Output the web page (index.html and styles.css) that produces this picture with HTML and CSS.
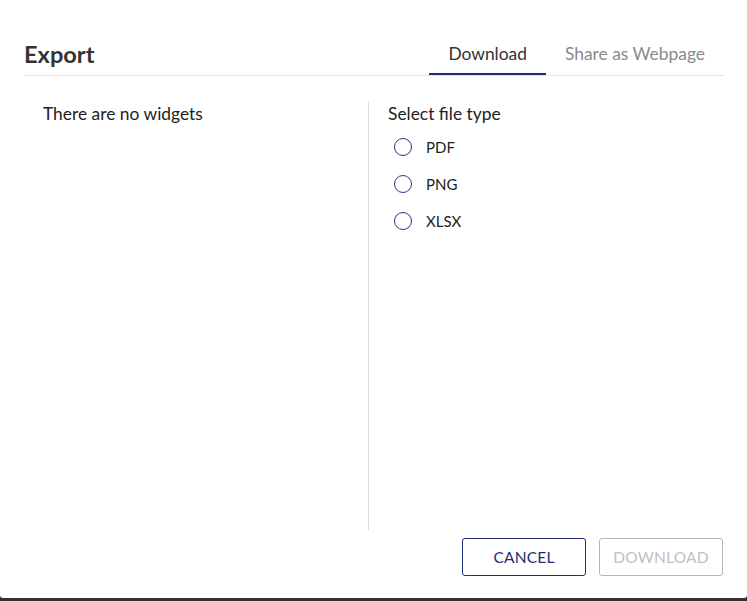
FILE: index.html
```html
<!DOCTYPE html>
<html lang="en">
<head>
    <meta charset="UTF-8">
    <title>Export</title>
    <link rel="stylesheet" href="styles.css">
</head>
<body>
    <div class="dialog">
        <div class="header">
            <h2>Export</h2>
            <div class="tabs">
                <div class="tab active">Download</div>
                <div class="tab">Share as Webpage</div>
            </div>
        </div>

        <div class="content">
            <div class="panel left">
                <p>There are no widgets</p>
            </div>
            <div class="panel right">
                <p>Select file type</p>
                <label class="radio"><span class="circle"></span>PDF</label>
                <label class="radio"><span class="circle"></span>PNG</label>
                <label class="radio"><span class="circle"></span>XLSX</label>
            </div>
        </div>

        <div class="footer">
            <button class="btn cancel">CANCEL</button>
            <button class="btn disabled">DOWNLOAD</button>
        </div>
    </div>
</body>
</html>
```

FILE: styles.css
```css
* {
    margin: 0;
    padding: 0;
    box-sizing: border-box;
}

body {
    font-family: Lato, "Open Sans", sans-serif;
    background: #333;
    color: #222;
    height: 601px;
    overflow: hidden;
}

.dialog {
    background: #fff;
    height: 598px;
    border-radius: 0 0 3px 3px;
    padding: 0 23px 0 24px;
}

.header {
    display: flex;
    justify-content: space-between;
    align-items: stretch;
    padding-top: 33px;
    height: 76px;
    border-bottom: 1px solid #e2e2e2;
}

.header h2 {
    font-size: 23.6px;
    font-weight: 700;
    color: #333;
    align-self: center;
}

.tabs {
    display: flex;
}

.tab {
    display: flex;
    align-items: center;
    padding: 0 19px;
    font-size: 17.4px;
    color: #8a8a8a;
    border-bottom: 2px solid transparent;
}

.tab.active {
    color: #333;
    border-bottom-color: #1e2c78;
}

.content {
    display: flex;
    margin-top: 25px;
    height: 429px;
}

.panel {
    padding: 1px 19px 0;
}

.panel p {
    font-size: 17.4px;
    line-height: 24px;
}

.left {
    width: 345px;
    border-right: 1px solid #ddd;
}

.right {
    flex: 1;
}

.right p {
    margin-bottom: 2px;
}

.radio {
    display: flex;
    align-items: center;
    height: 37px;
    padding-left: 6px;
    gap: 14px;
    font-size: 15px;
    color: #222;
}

.circle {
    width: 18px;
    height: 18px;
    border: 1.5px solid #2a3a86;
    border-radius: 50%;
}

.footer {
    display: flex;
    justify-content: flex-end;
    gap: 13px;
    padding-top: 8px;
    padding-right: 1px;
}

.btn {
    width: 124px;
    height: 38px;
    background: #fff;
    border-radius: 3px;
    font-family: Lato, sans-serif;
    font-size: 15.5px;
    letter-spacing: 0.2px;
}

.cancel {
    border: 1px solid #1e2c78;
    color: #1e2c78;
}

.disabled {
    border: 1px solid #b5b5b5;
    color: #c0c0c0;
}
```
